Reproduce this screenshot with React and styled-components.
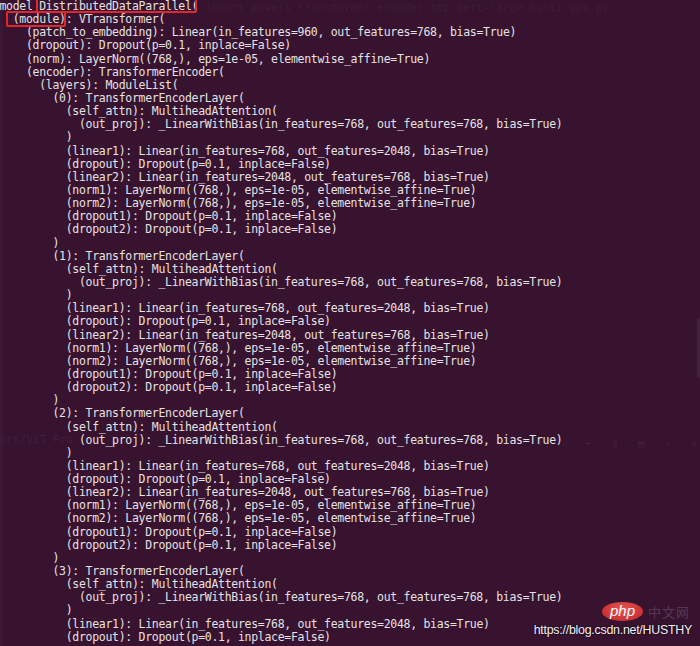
import React from "react";
import styled, { createGlobalStyle } from "styled-components";

const GlobalStyle = createGlobalStyle`
  html, body { margin: 0; padding: 0; background: #37132f; overflow: hidden; }
`;

const Screen = styled.div`
  position: relative;
  width: 700px;
  height: 646px;
  overflow: hidden;
  background: linear-gradient(90deg, #3d1a36 0px, #37132f 4px, #37132f 100%);
`;

const Terminal = styled.div`
  margin: 0 0 0 -0.5px;
  font-family: "DejaVu Sans Mono", "Liberation Mono", monospace;
  font-size: 11.5px;
  letter-spacing: -0.3px;
  line-height: 13.15px;
  color: #e6e1e4;
  white-space: pre;
  display: flex;
  flex-direction: column;
`;

const Line = styled.div`
  padding-left: ${(p) => p.$indent * 6.622}px;
  height: 13.15px;
`;

const Boxed = styled.span`
  position: relative;
  &::before {
    content: "";
    position: absolute;
    left: ${(p) => p.$l}px;
    right: ${(p) => p.$r}px;
    top: ${(p) => p.$t}px;
    bottom: ${(p) => p.$b}px;
    border: 2px solid #e3262c;
    border-radius: 2px;
  }
`;

const Ghost = styled.div`
  position: absolute;
  left: ${(p) => p.$x}px;
  top: ${(p) => p.$y}px;
  font-family: "DejaVu Sans Mono", monospace;
  font-size: 11px;
  color: ${(p) => p.$c};
  white-space: pre;
`;

const Scroll = styled.div`
  position: absolute;
  right: 0;
  top: 318px;
  width: 3px;
  height: 60px;
  background: rgba(255, 255, 255, 0.06);
`;

const Watermark = styled.div`
  position: absolute;
  right: 8px;
  bottom: 9px;
  display: flex;
  flex-direction: column;
  align-items: flex-end;
  gap: 2px;
`;

const LogoRow = styled.div`
  display: flex;
  align-items: center;
  gap: 5px;
  margin-right: 2px;
`;

const PhpBadge = styled.span`
  display: inline-flex;
  align-items: center;
  justify-content: center;
  width: 41px;
  height: 19px;
  border-radius: 50%;
  background: radial-gradient(ellipse at 50% 35%, #e55552 0%, #c92f31 75%);
  color: #fff;
  font-family: "Liberation Sans", Arial, sans-serif;
  font-style: italic;
  font-size: 15px;
  line-height: 1;
  padding-bottom: 2px;
  box-sizing: border-box;
`;

const Cn = styled.span`
  font-family: "Noto Sans CJK SC", sans-serif;
  font-size: 13px;
  color: rgba(255, 255, 255, 0.18);
  letter-spacing: 1px;
`;

const Url = styled.span`
  font-family: "Liberation Sans", Arial, sans-serif;
  font-size: 12.4px;
  letter-spacing: -0.25px;
  color: #f2f0f2;
  text-shadow: 0 0 2px #1a0616, 0 0 1px #1a0616;
`;

const layer = (n) => [
  [8, `(${n}): TransformerEncoderLayer(`],
  [10, "(self_attn): MultiheadAttention("],
  [12, "(out_proj): _LinearWithBias(in_features=768, out_features=768, bias=True)"],
  [10, ")"],
  [10, "(linear1): Linear(in_features=768, out_features=2048, bias=True)"],
  [10, "(dropout): Dropout(p=0.1, inplace=False)"],
  [10, "(linear2): Linear(in_features=2048, out_features=768, bias=True)"],
  [10, "(norm1): LayerNorm((768,), eps=1e-05, elementwise_affine=True)"],
  [10, "(norm2): LayerNorm((768,), eps=1e-05, elementwise_affine=True)"],
  [10, "(dropout1): Dropout(p=0.1, inplace=False)"],
  [10, "(dropout2): Dropout(p=0.1, inplace=False)"],
  [8, ")"],
];

const lines = [
  [4, "(patch_to_embedding): Linear(in_features=960, out_features=768, bias=True)"],
  [4, "(dropout): Dropout(p=0.1, inplace=False)"],
  [4, "(norm): LayerNorm((768,), eps=1e-05, elementwise_affine=True)"],
  [4, "(encoder): TransformerEncoder("],
  [6, "(layers): ModuleList("],
  ...layer(0),
  ...layer(1),
  ...layer(2),
  ...layer(3).slice(0, 6),
];

export default function App() {
  return (
    <Screen>
      <GlobalStyle />
      <Terminal>
        <Line $indent={0}>
          {"model "}
          <Boxed $l={-3} $r={1} $t={-2} $b={0}>DistributedDataParallel(</Boxed>
        </Line>
        <Line $indent={2}>
          <Boxed $l={-7} $r={0} $t={-1} $b={-1}>(module)</Boxed>
          {": VTransformer("}
        </Line>
        {lines.map(([indent, text], i) => (
          <Line key={i} $indent={indent}>
            {text}
          </Line>
        ))}
      </Terminal>
      <Ghost $x={205} $y={1} $c="rgba(255,255,255,0.05)">
        {"import powers transformer encoder tcp bert-large multi gpu.py  :"}
      </Ghost>
      <Ghost $x={0} $y={433} $c="rgba(150,170,230,0.1)">
        {"ork/ViT_Pro"}
      </Ghost>
      <Ghost $x={585} $y={437} $c="rgba(255,255,255,0.08)">
        {"+   \u25AF   \u25A4   -   \u00D7"}
      </Ghost>
      <Scroll />
      <Watermark>
        <LogoRow>
          <PhpBadge>php</PhpBadge>
          <Cn>中文网</Cn>
        </LogoRow>
        <Url>https://blog.csdn.net/HUSTHY</Url>
      </Watermark>
    </Screen>
  );
}
